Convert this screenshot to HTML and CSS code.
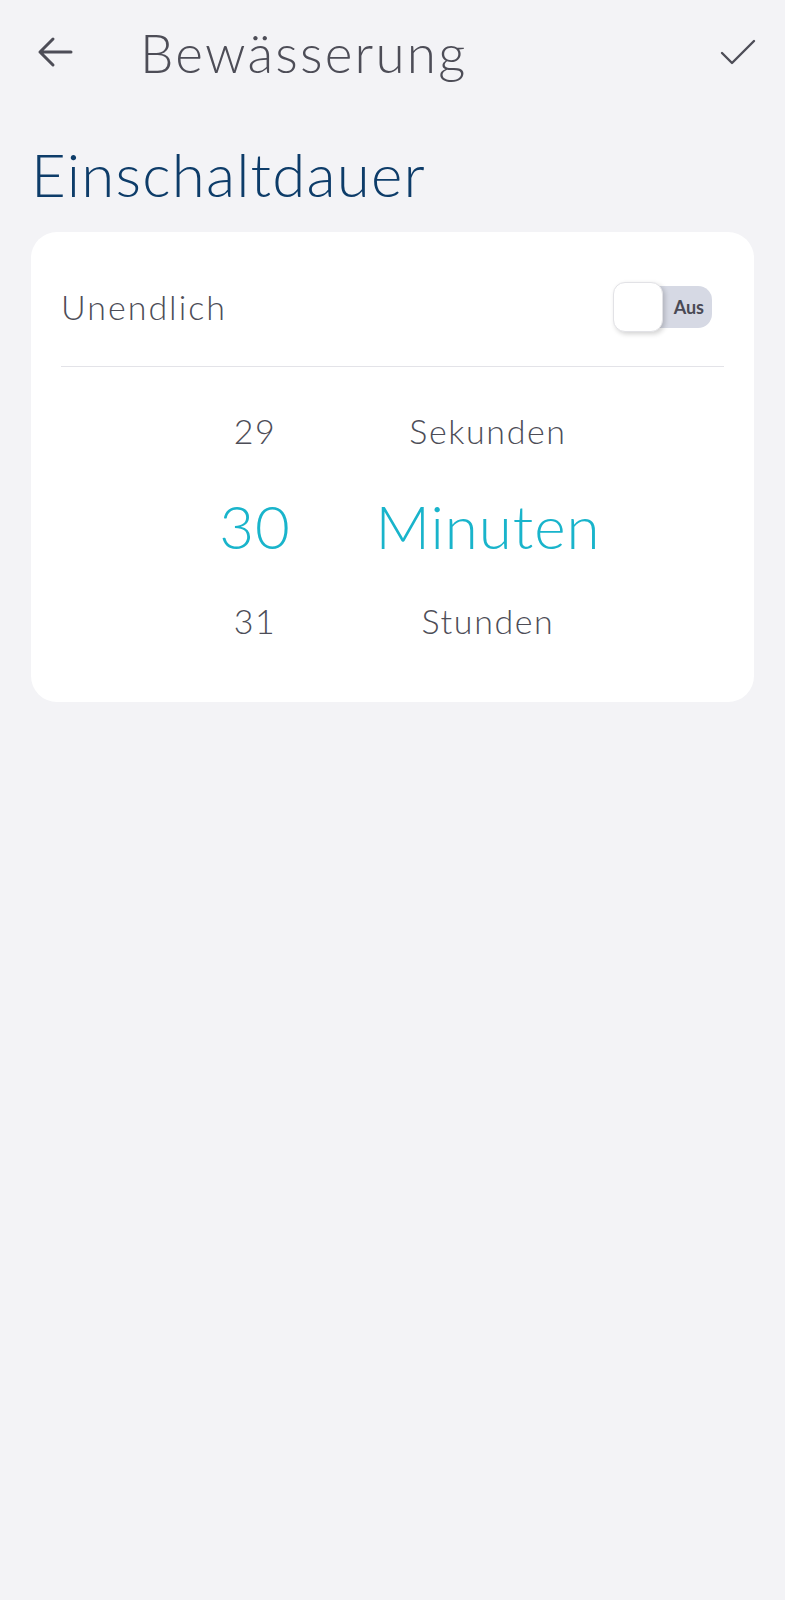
FILE: index.html
```html
<!DOCTYPE html>
<html lang="de">
<head>
    <meta charset="UTF-8">
    <meta name="viewport" content="width=device-width, initial-scale=1.0">
    <title>Bewässerung</title>
    <link rel="stylesheet" href="styles.css">
</head>
<body>

    <!-- Top bar -->
    <div class="top-bar">
        <svg class="back-icon" width="36" height="32" viewBox="0 0 36 32">
            <path d="M34 16H3M16 3L3 16L16 29" fill="none" stroke="#4d4d57" stroke-width="3" stroke-linecap="round" stroke-linejoin="round"/>
        </svg>
        <h1 class="top-title">Bewässerung</h1>
        <svg class="check-icon" width="38" height="30" viewBox="0 0 38 30">
            <path d="M3 16L13 26L35 4" fill="none" stroke="#4d4d57" stroke-width="2.4" stroke-linecap="round" stroke-linejoin="round"/>
        </svg>
    </div>

    <h2 class="section-title">Einschaltdauer</h2>

    <!-- Duration card -->
    <div class="card">
        <div class="row">
            <span class="row-label">Unendlich</span>
            <div class="switch">
                <div class="switch-knob"></div>
                <span class="switch-text">Aus</span>
            </div>
        </div>

        <div class="picker">
            <div class="picker-item">29</div>
            <div class="picker-item">Sekunden</div>
            <div class="picker-item selected">30</div>
            <div class="picker-item selected">Minuten</div>
            <div class="picker-item">31</div>
            <div class="picker-item">Stunden</div>
        </div>
    </div>

</body>
</html>
```

FILE: styles.css
```css
body {
    margin: 0;
    padding: 0;
    font-family: Lato, "Open Sans", sans-serif;
    font-weight: 300;
    background-color: #f3f3f6;
    color: #4d4d57;
}

/* Top bar */
.top-bar {
    display: flex;
    align-items: center;
    height: 104px;
    padding: 0 28px 2px 37px;
}

.back-icon {
    flex: none;
}

.top-title {
    flex: 1;
    margin: 0 0 0 67px;
    font-size: 53px;
    font-weight: 300;
    color: #4d4d57;
    letter-spacing: 2.2px;
}

.check-icon {
    flex: none;
}

/* Section heading */
.section-title {
    margin: 32px 0 22px 31px;
    font-size: 60px;
    font-weight: 300;
    color: #0d3c69;
    line-height: 72px;
    letter-spacing: 1.2px;
}

/* Card */
.card {
    background-color: #fff;
    border-radius: 26px;
    margin: 0 31px;
    padding: 0 30px 4px;
}

.row {
    display: flex;
    align-items: center;
    justify-content: space-between;
    box-sizing: border-box;
    height: 135px;
    padding-top: 15px;
    border-bottom: 1.5px solid #e3e3e8;
}

.row-label {
    font-size: 34px;
    letter-spacing: 2px;
    color: #4d4d57;
}

/* Switch */
.switch {
    position: relative;
    width: 99px;
    height: 42px;
    margin-right: 12px;
    background-color: #d6d9e4;
    border-radius: 14px;
    display: flex;
    align-items: center;
    justify-content: flex-end;
}

.switch-knob {
    position: absolute;
    left: 0;
    top: -4px;
    width: 50px;
    height: 50px;
    box-sizing: border-box;
    background-color: #fff;
    border: 1.5px solid #e2e2e6;
    border-radius: 12px;
    box-shadow: 2px 2px 5px rgba(0, 0, 0, 0.18);
}

.switch-text {
    font-size: 18px;
    font-weight: 700;
    color: #4a4a55;
    margin-right: 8px;
}

/* Picker */
.picker {
    display: grid;
    grid-template-columns: 140px 260px;
    column-gap: 33px;
    justify-content: center;
    padding: 16px 0 30px 18px;
}

.picker-item {
    height: 95px;
    display: flex;
    align-items: center;
    justify-content: center;
    font-size: 34px;
    letter-spacing: 1.6px;
    color: #4d4d57;
}

.picker-item.selected {
    font-size: 60px;
    letter-spacing: 1px;
    color: #19b4cb;
}
```
